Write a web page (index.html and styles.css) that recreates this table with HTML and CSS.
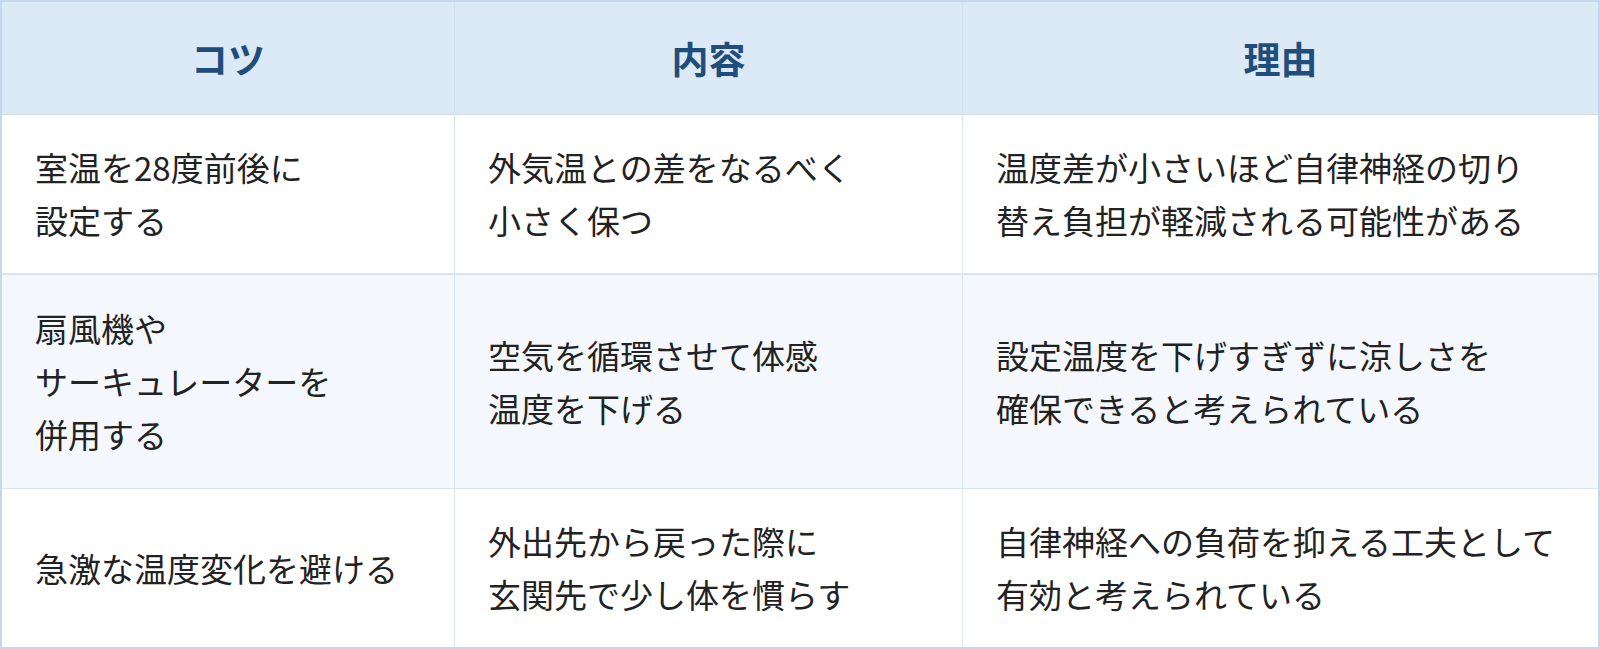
FILE: index.html
```html
<!DOCTYPE html>
<html lang="ja">
<head>
<meta charset="utf-8">
<link rel="stylesheet" href="styles.css">
</head>
<body>
<table class="tips">
  <colgroup>
    <col class="c1">
    <col class="c2">
    <col class="c3">
  </colgroup>
  <thead>
    <tr>
      <th>コツ</th>
      <th>内容</th>
      <th>理由</th>
    </tr>
  </thead>
  <tbody>
    <tr class="r1">
      <td>室温を28度前後に<br>設定する</td>
      <td>外気温との差をなるべく<br>小さく保つ</td>
      <td>温度差が小さいほど自律神経の切り<br>替え負担が軽減される可能性がある</td>
    </tr>
    <tr class="r2 alt">
      <td>扇風機や<br>サーキュレーターを<br>併用する</td>
      <td>空気を循環させて体感<br>温度を下げる</td>
      <td>設定温度を下げすぎずに涼しさを<br>確保できると考えられている</td>
    </tr>
    <tr class="r3">
      <td>急激な温度変化を避ける</td>
      <td>外出先から戻った際に<br>玄関先で少し体を慣らす</td>
      <td>自律神経への負荷を抑える工夫として<br>有効と考えられている</td>
    </tr>
  </tbody>
</table>
</body>
</html>
```

FILE: styles.css
```css
html, body {
  margin: 0;
  padding: 0;
  background: #ffffff;
}

.tips {
  width: 1600px;
  height: 649px;
  table-layout: fixed;
  border-collapse: separate;
  border-spacing: 0;
  border: 2px solid #c6d8eb;
  font-family: "Noto Sans CJK JP", "Noto Sans", sans-serif;
  color: #222222;
}

.c1 { width: 453px; }
.c2 { width: 508px; }
.c3 { width: auto; }

.tips th {
  height: 113px;
  box-sizing: border-box;
  padding: 0;
  background: #dce9f6;
  color: #1f4e7c;
  font-size: 37px;
  font-weight: 700;
  text-align: center;
  vertical-align: middle;
  border-bottom: 2px solid #d3e2f1;
  border-right: 1px solid #d3e2f1;
}

.tips th:last-child,
.tips td:last-child {
  border-right: none;
}

.tips td {
  box-sizing: border-box;
  padding: 0 16px 0 33px;
  font-size: 33px;
  line-height: 53px;
  text-align: left;
  vertical-align: middle;
  border-right: 1px solid #dae5f1;
  border-bottom: 1px solid #dae5f1;
  background: #ffffff;
}

.tips tr.r1 td {
  height: 160px;
  border-bottom-width: 2px;
}

.tips tr.r2 td {
  height: 214px;
}

.tips tr.r3 td {
  border-bottom: none;
}

.tips tr.alt td {
  background: #f4f8fc;
}
```
